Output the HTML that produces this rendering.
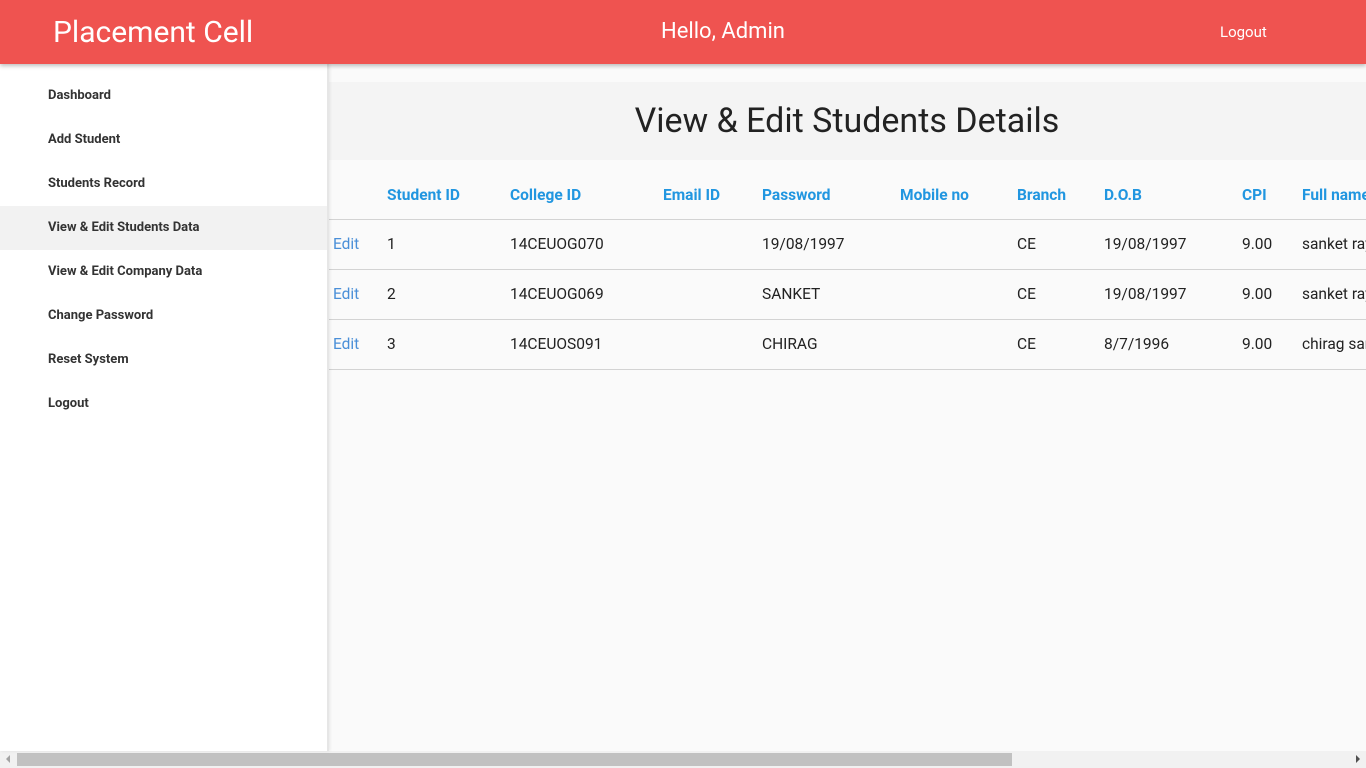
<!DOCTYPE html>
<html><head><style>
*{margin:0;padding:0;box-sizing:border-box}
body{width:1366px;height:768px;overflow:hidden;background:#fafafa;font-family:"Roboto","Liberation Sans",sans-serif;position:relative;color:#222}
.hdr{position:absolute;left:0;top:0;width:1366px;height:64px;background:#ef5350;box-shadow:0 2px 4px rgba(0,0,0,.25);z-index:3;color:#fff}
.hdr .t{position:absolute;left:53px;top:15px;font-size:30px}
.hdr .h{position:absolute;left:661px;top:19px;font-size:22px}
.hdr .l{position:absolute;left:1220px;top:23px;font-size:15px}
.side{position:absolute;left:0;top:64px;width:329px;height:687px;background:#fff;border-right:2px solid #e6e6e6;box-shadow:1px 0 3px rgba(0,0,0,.08);z-index:2}
.side div{height:44px;line-height:44px;padding-left:48px;font-size:13px;font-weight:bold;color:#333}
.side div.a{background:#f2f2f2}
.band{position:absolute;left:328px;top:82px;width:1038px;height:78px;background:#f4f4f4;text-align:center;font-size:34px;line-height:78px;color:#222}
.c{position:absolute;font-size:15.5px;white-space:nowrap}
.th{color:#2196e0;font-weight:bold;top:186px}
.line{position:absolute;left:328px;width:1038px;height:1px;background:#d3d3d3}
.e{color:#4a8fd8}
.sb{position:absolute;left:0;top:751px;width:1366px;height:17px;background:#f1f1f1}
.th2{position:absolute;left:17px;top:753px;width:995px;height:13px;background:#c1c1c1}
</style></head><body>
<div class="hdr"><span class="t">Placement Cell</span><span class="h">Hello, Admin</span><span class="l">Logout</span></div>
<div class="side" style="padding-top:10px">
<div>Dashboard</div><div>Add Student</div><div>Students Record</div><div class="a">View &amp; Edit Students Data</div><div>View &amp; Edit Company Data</div><div>Change Password</div><div>Reset System</div><div>Logout</div>
</div>
<div class="band">View &amp; Edit Students Details</div>
<span class="c th" style="left:387px">Student ID</span>
<span class="c th" style="left:510px">College ID</span>
<span class="c th" style="left:663px">Email ID</span>
<span class="c th" style="left:762px">Password</span>
<span class="c th" style="left:900px">Mobile no</span>
<span class="c th" style="left:1017px">Branch</span>
<span class="c th" style="left:1104px">D.O.B</span>
<span class="c th" style="left:1242px">CPI</span>
<span class="c th" style="left:1302px">Full name</span>
<div class="line" style="top:219px"></div>
<div class="line" style="top:269px"></div>
<div class="line" style="top:319px"></div>
<div class="line" style="top:369px"></div>
<span class="c e" style="left:333px;top:235px">Edit</span><span class="c" style="left:387px;top:235px">1</span><span class="c" style="left:510px;top:235px">14CEUOG070</span><span class="c" style="left:762px;top:235px">19/08/1997</span><span class="c" style="left:1017px;top:235px">CE</span><span class="c" style="left:1104px;top:235px">19/08/1997</span><span class="c" style="left:1242px;top:235px">9.00</span><span class="c" style="left:1302px;top:235px">sanket rayth</span>
<span class="c e" style="left:333px;top:285px">Edit</span><span class="c" style="left:387px;top:285px">2</span><span class="c" style="left:510px;top:285px">14CEUOG069</span><span class="c" style="left:762px;top:285px">SANKET</span><span class="c" style="left:1017px;top:285px">CE</span><span class="c" style="left:1104px;top:285px">19/08/1997</span><span class="c" style="left:1242px;top:285px">9.00</span><span class="c" style="left:1302px;top:285px">sanket rayth</span>
<span class="c e" style="left:333px;top:335px">Edit</span><span class="c" style="left:387px;top:335px">3</span><span class="c" style="left:510px;top:335px">14CEUOS091</span><span class="c" style="left:762px;top:335px">CHIRAG</span><span class="c" style="left:1017px;top:335px">CE</span><span class="c" style="left:1104px;top:335px">8/7/1996</span><span class="c" style="left:1242px;top:335px">9.00</span><span class="c" style="left:1302px;top:335px">chirag sarv</span>
<div class="sb"></div><div class="th2"></div>
<div style="position:absolute;left:6px;top:755px;width:0;height:0;border-top:4px solid transparent;border-bottom:4px solid transparent;border-right:4px solid #a3a3a3"></div>
<div style="position:absolute;left:1356px;top:755px;width:0;height:0;border-top:4px solid transparent;border-bottom:4px solid transparent;border-left:4px solid #505050"></div>
</body></html>
